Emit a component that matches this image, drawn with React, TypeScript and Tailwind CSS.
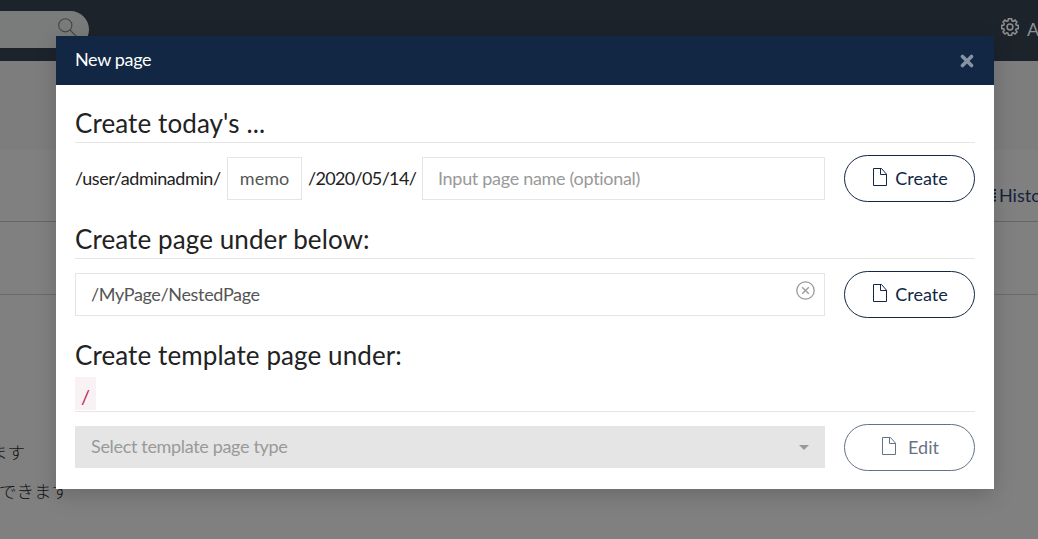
import type { ReactNode } from 'react';

function FileIcon() {
  return (
    <svg className="h-[18px] w-[14px] shrink-0 -translate-y-0.5" viewBox="0 0 14 18" fill="none" stroke="currentColor">
      <path d="M0.5 0.5H8.5L13.5 6.2V17.5H0.5ZM7.5 0.5V6.5H13.5" />
    </svg>
  );
}

function ActionButton({ label, disabled = false }: { label: string; disabled?: boolean }) {
  return (
    <button
      disabled={disabled}
      className={`flex h-[47px] w-[131px] shrink-0 items-center justify-center rounded-full border border-[#112744] pl-[2px] text-[#112744] ${disabled ? 'gap-3 opacity-65' : 'gap-2'}`}
    >
      <FileIcon />
      <span>{label}</span>
    </button>
  );
}

function Title({ children }: { children: ReactNode }) {
  return <h3 className="text-[26px] leading-[31px] tracking-[0.1px]">{children}</h3>;
}

function PageBehind() {
  return (
    <div className="h-[539px] w-full bg-[#808080]">
      <div className="flex h-[61px] justify-between bg-[#1c232b] pt-[11px]">
        <div className="flex h-[37px] w-[89px] justify-end rounded-r-full bg-[#7a7c7b] pt-[7px] pr-[12px]">
          <svg className="h-[19px] w-[19px]" viewBox="0 0 19 19" fill="none" stroke="#454545" strokeWidth="1.1">
            <circle cx="7.3" cy="7.3" r="6.6" />
            <path d="M12 12L18.3 18.3" />
          </svg>
        </div>
        <div className="flex w-[37px] shrink-0 gap-2 overflow-hidden pt-[7px] text-[#8d8e90]">
          <svg className="h-[18px] w-[18px] shrink-0" viewBox="0 0 18 18" fill="none" stroke="currentColor" strokeWidth="1.5">
            <path d="M7.4.7h3.2l.4 2.2 1.2.5L14 2.1l2 2-1.3 1.8.5 1.2 2.1.4v3.1l-2.1.4-.5 1.2L16 14l-2 2-1.8-1.3-1.2.5-.4 2.1H7.4L7 15.200l-1.200-.5L4 16l-2-2 1.300-1.800-.5-1.200-2.100-.4V7.500l2.100-.4.5-1.200L2 4.100l2-2 1.800 1.300L7 2.900Z" />
            <circle cx="9" cy="9" r="2.900" />
          </svg>
          <span className="leading-[22px]">Admin</span>
        </div>
      </div>
      <div className="h-[89px] bg-[#7d7d7d]" />
      <div className="flex h-[72px] justify-end border-b border-[#666666]">
        <div className="flex w-[46px] gap-0.5 overflow-hidden pt-[33px] text-[#13233d]">
          <svg className="mt-[5px] h-[15px] w-[4px] shrink-0" viewBox="0 0 4 15" fill="none" stroke="currentColor" strokeWidth="1.8">
            <path d="M2 2H4M2 5.500H4M2 9H4M2 12.500H4" />
          </svg>
          <span className="pl-px leading-[24px]">History</span>
        </div>
      </div>
      <div className="h-[73px] border-b border-[#6b6b6b]" />
      <div className="flex flex-col gap-[9px] pt-[142px] font-['Noto_Sans_CJK_JP',sans-serif] text-[17.5px] font-light leading-[30px] text-[#151515]">
        <div className="-ml-[10px]">ます</div>
        <div className="-ml-px">できます</div>
      </div>
    </div>
  );
}

function NewPageModal() {
  return (
    <section className="absolute top-[36px] left-[56px] h-[453px] w-[938px] bg-white text-[#222222] shadow-[0_6px_20px_rgba(0,0,0,0.18)]">
      <header className="flex h-[49px] items-center justify-between bg-[#112744] pr-5 pl-[19px] text-white">
        <h2 className="pb-[3px] leading-[26px] tracking-[-0.35px]">New page</h2>
        <button aria-label="Close">
          <svg className="h-[14px] w-[14px]" viewBox="0 0 14 14" fill="none" stroke="#8893a2" strokeWidth="3.600" strokeLinecap="round">
            <path d="M2.500 2.500L11.500 11.500M11.500 2.500L2.500 11.500" />
          </svg>
        </button>
      </header>
      <div className="px-[19px] pt-[22px]">
        <div className="h-[36px] border-b border-[#e5e5e5] pt-px">
          <Title>Create today's ...</Title>
        </div>
        <div className="mt-3 flex items-center justify-between">
          <div className="flex w-[750px] items-center">
            <span className="w-[152px] tracking-[-0.42px]">/user/adminadmin/</span>
            <input aria-label="Name" defaultValue="memo" className="h-[43px] w-[75px] border border-[#e5e5e5] pb-[2px] text-center text-[#555555]" />
            <span className="w-[120px] pl-[6px] tracking-[-0.66px]">/2020/05/14/</span>
            <input aria-label="Page name" placeholder="Input page name (optional)" className="h-[43px] min-w-0 flex-1 border border-[#e5e5e5] px-[15px] pb-[2px] tracking-[-0.3px] placeholder:text-[#999999]" />
          </div>
          <ActionButton label="Create" />
        </div>
        <div className="mt-[21px] h-[36px] border-b border-[#e5e5e5] pt-px">
          <Title>Create page under below:</Title>
        </div>
        <div className="mt-3 flex items-center justify-between">
          <div className="flex h-[43px] w-[750px] items-center justify-between border border-[#e5e5e5] pr-[9px] pl-[15px]">
            <input aria-label="Parent path" defaultValue="/MyPage/NestedPage" className="w-[600px] tracking-[-0.34px] text-[#555555]" />
            <svg className="mb-[8px] h-[19px] w-[19px]" viewBox="0 0 19 19" fill="none" stroke="#999999" strokeWidth="1.300">
              <circle cx="9.500" cy="9.500" r="8.700" />
              <path d="M6.200 6.200L12.800 12.800M12.800 6.200L6.200 12.800" />
            </svg>
          </div>
          <ActionButton label="Create" />
        </div>
        <div className="mt-[21px] h-[73px] border-b border-[#e5e5e5] pt-px">
          <Title>Create template page under:</Title>
          <code className="mt-[6px] flex h-[33px] w-[21px] items-center justify-center bg-[#f9f2f4] pt-1 font-['Lato',sans-serif] text-[20px] text-[#c7254e]">/</code>
        </div>
        <div className="mt-3 flex items-center justify-between">
          <button className="mb-px flex h-[42px] w-[750px] items-center justify-between bg-[#e5e5e5] pr-4 pl-4 text-[#999999]">
            <span className="pb-px tracking-[-0.33px]">Select template page type</span>
            <svg className="h-[5px] w-[10px]" viewBox="0 0 10 5" fill="currentColor"><path d="M0 0H10L5 5Z" /></svg>
          </button>
          <ActionButton label="Edit" disabled />
        </div>
      </div>
    </section>
  );
}

export default function App() {
  return (
    <main className="relative h-[539px] w-[1038px] overflow-hidden font-['Lato',sans-serif] text-[18px]">
      <PageBehind />
      <NewPageModal />
    </main>
  );
}
